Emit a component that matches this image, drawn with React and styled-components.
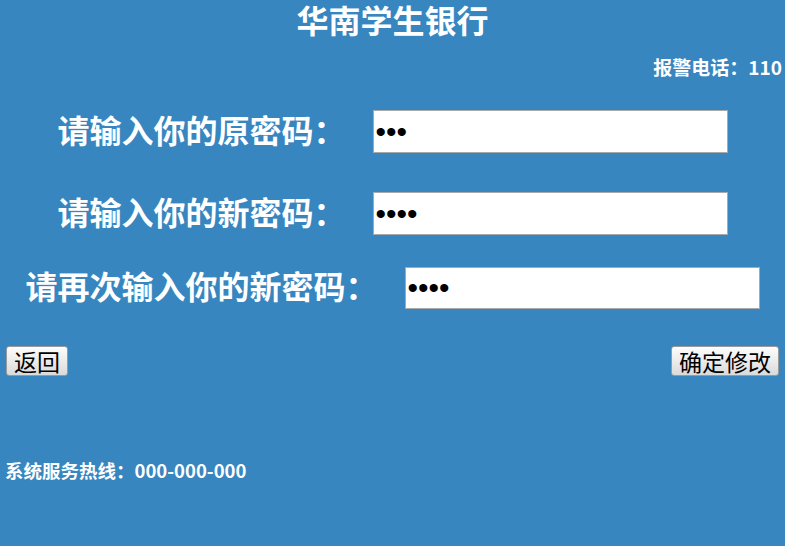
import styled, { createGlobalStyle } from "styled-components";

const GlobalStyle = createGlobalStyle`
  html, body {
    margin: 0;
    padding: 0;
    background: #3786bf;
  }
`;

const Page = styled.div`
  min-height: 100vh;
  background: #3786bf;
  color: #ffffff;
  font-family: "Liberation Serif", "Noto Sans CJK SC", serif;
  font-weight: bold;
  display: flex;
  flex-direction: column;
`;

const Title = styled.h1`
  margin: 0;
  padding-top: 4px;
  font-size: 32px;
  line-height: 36px;
  text-align: center;
`;

const Alarm = styled.div`
  margin-top: 17px;
  padding-right: 3px;
  font-family: "Noto Sans CJK SC", sans-serif;
  font-size: 19px;
  line-height: 20px;
  text-align: right;
`;

const Form = styled.form`
  display: flex;
  flex-direction: column;
`;

const Row = styled.div`
  display: flex;
  align-items: center;
  justify-content: center;
  gap: 27px;
  margin-top: ${(p) => p.$top}px;
`;

const Label = styled.label`
  font-size: 32px;
  line-height: 40px;
  white-space: nowrap;
`;

const Input = styled.input`
  box-sizing: border-box;
  width: 355px;
  height: ${(p) => p.$h || 43}px;
  margin: 0;
  padding: 0 2px;
  border: 1px solid #a9a9a9;
  background: #ffffff;
  color: #000000;
  font-size: 30px;
  font-family: "Liberation Sans", sans-serif;
  outline: none;
`;

const Actions = styled.div`
  display: flex;
  justify-content: space-between;
  padding: 0 6px;
  margin-top: 37px;
`;

const Button = styled.button`
  height: 30px;
  padding: 0 7px;
  font-family: "Noto Sans CJK SC", sans-serif;
  font-size: 23px;
  line-height: 26px;
  color: #000000;
  background: linear-gradient(#fdfdfd, #dadada);
  border: 1px solid #9a9a9a;
  border-radius: 3px;
  cursor: pointer;
`;

const Footer = styled.div`
  margin-top: 84px;
  padding-left: 5px;
  font-family: "Noto Sans CJK SC", sans-serif;
  font-size: 18.5px;
  line-height: 20px;
`;

const App = () => {
  return (
    <Page>
      <GlobalStyle />
      <Title>华南学生银行</Title>
      <Alarm>报警电话：110</Alarm>
      <Form onSubmit={(e) => e.preventDefault()}>
        <Row $top={33}>
          <Label>请输入你的原密码：</Label>
          <Input type="password" defaultValue="123" />
        </Row>
        <Row $top={39}>
          <Label>请输入你的新密码：</Label>
          <Input type="password" defaultValue="1234" />
        </Row>
        <Row $top={32}>
          <Label>请再次输入你的新密码：</Label>
          <Input type="password" defaultValue="1234" $h={42} />
        </Row>
        <Actions>
          <Button type="button">返回</Button>
          <Button type="submit">确定修改</Button>
        </Actions>
      </Form>
      <Footer>系统服务热线：000-000-000</Footer>
    </Page>
  );
};

export default App;
